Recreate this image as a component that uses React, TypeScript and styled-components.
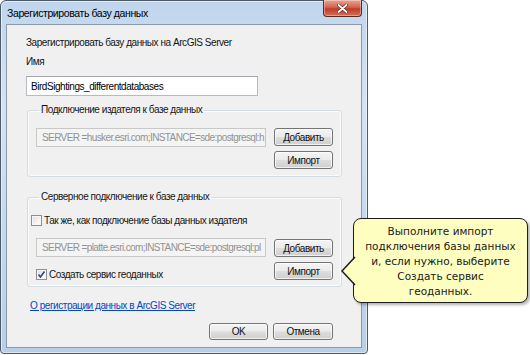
import React from "react";
import styled, { createGlobalStyle } from "styled-components";

const GlobalStyle = createGlobalStyle`
  body {
    margin: 0;
    background: #ffffff;
    font-family: "Liberation Sans", Arial, sans-serif;
  }
`;

const Page = styled.div`
  position: relative;
  width: 530px;
  height: 355px;
  overflow: hidden;
`;

const Window = styled.div`
  box-sizing: border-box;
  width: 368px;
  height: 354px;
  display: flex;
  flex-direction: column;
  padding: 0 5px 5px 5px;
  border: 1px solid #4c5966;
  border-radius: 6px 6px 4px 4px;
  background: linear-gradient(180deg, #c0d5ec 0%, #d3e3f4 30%, #c4d8ee 65%, #b8cfe7 100%);
  box-shadow: inset 0 0 0 1px rgba(255, 255, 255, 0.55);
`;

const TitleBar = styled.div`
  height: 23px;
  display: flex;
  align-items: flex-start;
  justify-content: space-between;
`;

const Title = styled.div`
  align-self: center;
  margin-left: 1px;
  padding-top: 1px;
  font-size: 10.5px;
  letter-spacing: -0.4px;
  color: #000;
`;

const CloseButton = styled.div`
  margin-top: -1px;
  width: 39px;
  height: 17px;
  display: flex;
  align-items: center;
  justify-content: center;
  box-sizing: border-box;
  border: 1px solid #5a2a22;
  border-top: none;
  border-radius: 0 0 4px 4px;
  background: linear-gradient(180deg, #e8a593 0%, #d46450 45%, #c13c26 55%, #d86d55 100%);
  box-shadow: inset 0 0 0 1px rgba(255, 255, 255, 0.35);
`;

const Client = styled.div`
  flex: 1;
  display: flex;
  flex-direction: column;
  padding: 0 19px 0 19px;
  border: 1px solid #8b9aab;
  background: #f0f0f0;
  font-size: 10px;
  letter-spacing: -0.45px;
  color: #141414;
`;

const Heading = styled.div`
  margin-top: 11px;
  line-height: 14px;
`;

const Label = styled.div`
  margin-top: 5px;
  line-height: 14px;
`;

const NameInput = styled.div`
  box-sizing: border-box;
  margin-top: 7px;
  width: 232px;
  height: 20px;
  padding-left: 4px;
  display: flex;
  align-items: center;
  background: #fff;
  border: 1px solid #b7bac0;
  border-top-color: #a3a6ad;
  color: #000;
  white-space: nowrap;
`;

const Group = styled.fieldset<{ $top: number; $bottom: number }>`
  margin: ${({ $top }) => $top}px 0 0 1px;
  padding: 12px 8px ${({ $bottom }) => $bottom}px 8px;
  border: 1px solid #d3dde4;
  border-radius: 3px;
  box-shadow: inset 0 0 0 1px #fafbfc;
  min-width: 0;
`;

const Legend = styled.legend`
  margin-left: 3px;
  padding: 0 2px;
  line-height: 12px;
`;

const Row = styled.div<{ $gap?: number }>`
  display: flex;
  align-items: flex-start;
  gap: 8px;
  margin-top: ${({ $gap }) => $gap ?? 0}px;
`;

const Column = styled.div<{ $offset?: number }>`
  display: flex;
  flex-direction: column;
  gap: 5px;
  margin-top: ${({ $offset }) => $offset ?? 0}px;
`;

const ConnInput = styled.div`
  box-sizing: border-box;
  width: 230px;
  height: 19px;
  padding-left: 5px;
  display: flex;
  align-items: center;
  overflow: hidden;
  white-space: nowrap;
  letter-spacing: -0.6px;
  background: #f4f4f4;
  border: 1px solid #c8c8c8;
  color: #929292;
`;

const Button = styled.div<{ $w?: number; $h?: number }>`
  box-sizing: border-box;
  width: ${({ $w }) => $w ?? 59}px;
  height: ${({ $h }) => $h ?? 18}px;
  display: flex;
  align-items: center;
  justify-content: center;
  border: 1px solid #747474;
  border-radius: 3px;
  background: linear-gradient(180deg, #f4f4f4 0%, #ebebeb 48%, #dddddd 52%, #cfcfcf 100%);
  box-shadow: inset 0 0 0 1px rgba(255, 255, 255, 0.7);
  color: #111;
`;

const CheckRow = styled.label<{ $shift: number; $top: number }>`
  display: flex;
  align-items: center;
  gap: 2px;
  height: 14px;
  margin-left: ${({ $shift }) => $shift}px;
  margin-top: ${({ $top }) => $top}px;
`;

const Box = styled.span`
  box-sizing: border-box;
  width: 11px;
  height: 11px;
  display: flex;
  align-items: center;
  justify-content: center;
  border: 1px solid #8f8f8f;
  background: linear-gradient(135deg, #dcdcdc 0%, #f4f4f4 60%, #ffffff 100%);
  box-shadow: inset 0 0 0 1px #f6f6f6;
`;

const LinkText = styled.a`
  margin: 12px 0 0 4px;
  line-height: 14px;
  color: #0645c8;
  text-decoration: underline;
  cursor: pointer;
`;

const Footer = styled.div`
  display: flex;
  justify-content: flex-end;
  gap: 5px;
  margin-top: 10px;
  padding-right: 9px;
`;

const Callout = styled.div`
  position: absolute;
  left: 353px;
  top: 218px;
  box-sizing: border-box;
  width: 175px;
  height: 85px;
  padding-top: 5px;
  border: 1.5px solid #1e1e1e;
  border-radius: 8px;
  background: #fefec0;
  box-shadow: 2px 2px 3px rgba(0, 0, 0, 0.3);
  font-family: "DejaVu Sans", Verdana, sans-serif;
  font-size: 10.5px;
  line-height: 15px;
  text-align: center;
  color: #202020;
`;

const Tail = styled.svg`
  position: absolute;
  left: -14px;
  top: 37px;
`;

const CloseIcon = () => (
  <svg width="11" height="9" viewBox="0 0 11 9">
    <path d="M1.5 1 L9.5 8 M9.5 1 L1.5 8" stroke="#5a2a22" strokeWidth="3.2" strokeLinecap="round" />
    <path d="M1.5 1 L9.5 8 M9.5 1 L1.5 8" stroke="#ffffff" strokeWidth="1.8" strokeLinecap="round" />
  </svg>
);

const Check = ({ checked }: { checked?: boolean }) => (
  <Box>
    {checked && (
      <svg width="9" height="9" viewBox="0 0 9 9">
        <path d="M1.5 4.5 L3.5 7 L7.5 1.5" fill="none" stroke="#28427a" strokeWidth="1.5" />
      </svg>
    )}
  </Box>
);

export default function App() {
  return (
    <Page>
      <GlobalStyle />
      <Window>
        <TitleBar>
          <Title>Зарегистрировать базу данных</Title>
          <CloseButton>
            <CloseIcon />
          </CloseButton>
        </TitleBar>
        <Client>
          <Heading>Зарегистрировать базу данных на ArcGIS Server</Heading>
          <Label>Имя</Label>
          <NameInput>BirdSightings_differentdatabases</NameInput>

          <Group $top={8} $bottom={7}>
            <Legend>Подключение издателя к базе данных</Legend>
            <Row>
              <ConnInput>SERVER =husker.esri.com;INSTANCE=sde:postgresql:h</ConnInput>
              <Column>
                <Button>Добавить</Button>
                <Button>Импорт</Button>
              </Column>
            </Row>
          </Group>

          <Group $top={14} $bottom={5}>
            <Legend>Серверное подключение к базе данных</Legend>
            <CheckRow $shift={-5} $top={-2}>
              <Check />
              <span>Так же, как подключение базы данных издателя</span>
            </CheckRow>
            <Row $gap={11}>
              <Column>
                <ConnInput>SERVER =platte.esri.com;INSTANCE=sde:postgresql:pl</ConnInput>
                <CheckRow $shift={0} $top={5}>
                  <Check checked />
                  <span>Создать сервис геоданных</span>
                </CheckRow>
              </Column>
              <Column $offset={1}>
                <Button>Добавить</Button>
                <Button>Импорт</Button>
              </Column>
            </Row>
          </Group>

          <LinkText>О регистрации данных в ArcGIS Server</LinkText>
          <Footer>
            <Button $h={17}>OK</Button>
            <Button $w={60} $h={17}>
              Отмена
            </Button>
          </Footer>
        </Client>
      </Window>

      <Callout>
        <Tail width="17" height="30" viewBox="0 0 17 30">
          <polygon points="16,1 2,15 16,29" fill="#fefec0" />
          <polyline points="15,1 2,15 15,29" fill="none" stroke="#1e1e1e" strokeWidth="1.5" />
        </Tail>
        <div>Выполните импорт</div>
        <div>подключения базы данных</div>
        <div>и, если нужно, выберите</div>
        <div>Создать сервис</div>
        <div>геоданных.</div>
      </Callout>
    </Page>
  );
}
